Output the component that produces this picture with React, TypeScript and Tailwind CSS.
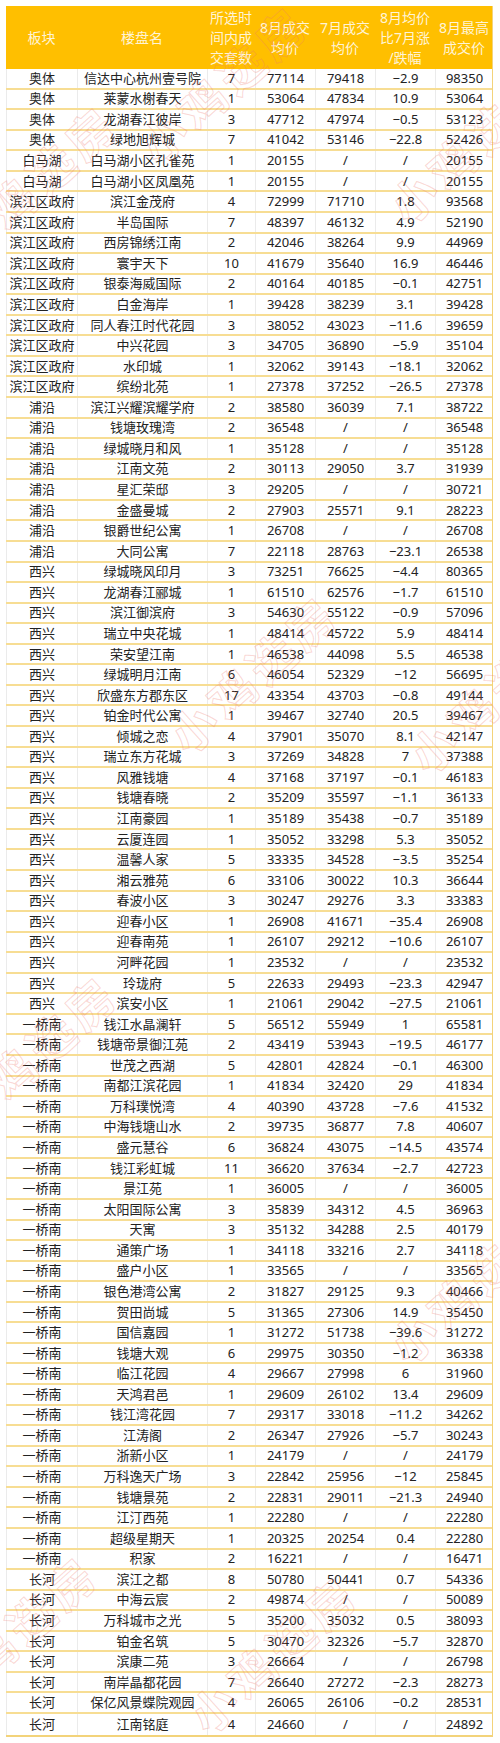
import React from "react";

type Row = [string, string, string, string, string, string, string];

const raw = `奥体 信达中心杭州壹号院 7 77114 79418 -2.9 98350
奥体 莱蒙水榭春天 1 53064 47834 10.9 53064
奥体 龙湖春江彼岸 3 47712 47974 -0.5 53123
奥体 绿地旭辉城 7 41042 53146 -22.8 52426
白马湖 白马湖小区孔雀苑 1 20155 / / 20155
白马湖 白马湖小区凤凰苑 1 20155 / / 20155
滨江区政府 滨江金茂府 4 72999 71710 1.8 93568
滨江区政府 半岛国际 7 48397 46132 4.9 52190
滨江区政府 西房锦绣江南 2 42046 38264 9.9 44969
滨江区政府 寰宇天下 10 41679 35640 16.9 46446
滨江区政府 银泰海威国际 2 40164 40185 -0.1 42751
滨江区政府 白金海岸 1 39428 38239 3.1 39428
滨江区政府 同人春江时代花园 3 38052 43023 -11.6 39659
滨江区政府 中兴花园 3 34705 36890 -5.9 35104
滨江区政府 水印城 1 32062 39143 -18.1 32062
滨江区政府 缤纷北苑 1 27378 37252 -26.5 27378
浦沿 滨江兴耀滨耀学府 2 38580 36039 7.1 38722
浦沿 钱塘玫瑰湾 2 36548 / / 36548
浦沿 绿城晓月和风 1 35128 / / 35128
浦沿 江南文苑 2 30113 29050 3.7 31939
浦沿 星汇荣邸 3 29205 / / 30721
浦沿 金盛曼城 2 27903 25571 9.1 28223
浦沿 银爵世纪公寓 1 26708 / / 26708
浦沿 大同公寓 7 22118 28763 -23.1 26538
西兴 绿城晓风印月 3 73251 76625 -4.4 80365
西兴 龙湖春江郦城 1 61510 62576 -1.7 61510
西兴 滨江御滨府 3 54630 55122 -0.9 57096
西兴 瑞立中央花城 1 48414 45722 5.9 48414
西兴 荣安望江南 1 46538 44098 5.5 46538
西兴 绿城明月江南 6 46054 52329 -12 56695
西兴 欣盛东方郡东区 17 43354 43703 -0.8 49144
西兴 铂金时代公寓 1 39467 32740 20.5 39467
西兴 倾城之恋 4 37901 35070 8.1 42147
西兴 瑞立东方花城 3 37269 34828 7 37388
西兴 风雅钱塘 4 37168 37197 -0.1 46183
西兴 钱塘春晓 2 35209 35597 -1.1 36133
西兴 江南豪园 1 35189 35438 -0.7 35189
西兴 云厦连园 1 35052 33298 5.3 35052
西兴 温馨人家 5 33335 34528 -3.5 35254
西兴 湘云雅苑 6 33106 30022 10.3 36644
西兴 春波小区 3 30247 29276 3.3 33383
西兴 迎春小区 1 26908 41671 -35.4 26908
西兴 迎春南苑 1 26107 29212 -10.6 26107
西兴 河畔花园 1 23532 / / 23532
西兴 玲珑府 5 22633 29493 -23.3 42947
西兴 滨安小区 1 21061 29042 -27.5 21061
一桥南 钱江水晶澜轩 5 56512 55949 1 65581
一桥南 钱塘帝景御江苑 2 43419 53943 -19.5 46177
一桥南 世茂之西湖 5 42801 42824 -0.1 46300
一桥南 南都江滨花园 1 41834 32420 29 41834
一桥南 万科璞悦湾 4 40390 43728 -7.6 41532
一桥南 中海钱塘山水 2 39735 36877 7.8 40607
一桥南 盛元慧谷 6 36824 43075 -14.5 43574
一桥南 钱江彩虹城 11 36620 37634 -2.7 42723
一桥南 景江苑 1 36005 / / 36005
一桥南 太阳国际公寓 3 35839 34312 4.5 36963
一桥南 天寓 3 35132 34288 2.5 40179
一桥南 通策广场 1 34118 33216 2.7 34118
一桥南 盛户小区 1 33565 / / 33565
一桥南 银色港湾公寓 2 31827 29125 9.3 40466
一桥南 贺田尚城 5 31365 27306 14.9 35450
一桥南 国信嘉园 1 31272 51738 -39.6 31272
一桥南 钱塘大观 6 29975 30350 -1.2 36338
一桥南 临江花园 4 29667 27998 6 31960
一桥南 天鸿君邑 1 29609 26102 13.4 29609
一桥南 钱江湾花园 7 29317 33018 -11.2 34262
一桥南 江涛阁 2 26347 27926 -5.7 30243
一桥南 浙新小区 1 24179 / / 24179
一桥南 万科逸天广场 3 22842 25956 -12 25845
一桥南 钱塘景苑 2 22831 29011 -21.3 24940
一桥南 江汀西苑 1 22280 / / 22280
一桥南 超级星期天 1 20325 20254 0.4 22280
一桥南 积家 2 16221 / / 16471
长河 滨江之都 8 50780 50441 0.7 54336
长河 中海云宸 2 49874 / / 50089
长河 万科城市之光 5 35200 35032 0.5 38093
长河 铂金名筑 5 30470 32326 -5.7 32870
长河 滨康二苑 3 26664 / / 26798
长河 南岸晶都花园 7 26640 27272 -2.3 28273
长河 保亿风景蝶院观园 4 26065 26106 -0.2 28531
长河 江南铭庭 4 24660 / / 24892`;

const rows: Row[] = raw
  .split("\n")
  .map((line) => line.trim().split(/\s+/).map((c) => c.replace(/^-/, "−")) as Row);

const cols = "grid grid-cols-[71px_130px_48px_60px_60px_60px_58px]";

const headers: string[][] = [
  ["板块"],
  ["楼盘名"],
  ["所选时", "间内成", "交套数"],
  ["8月成交", "均价"],
  ["7月成交", "均价"],
  ["8月均价", "比7月涨", "/跌幅"],
  ["8月最高", "成交价"],
];

// faint watermark spots: [left, top]
const marks: [number, number][] = [
  [120, 50],
  [370, 110],
  [-70, 150],
  [150, 640],
  [390, 660],
  [-70, 1020],
  [370, 1250],
  [170, 1620],
  [-90, 1600],
];

export default function App() {
  return (
    <div className="relative w-[500px] h-[1743px] bg-white overflow-hidden font-['Noto_Sans','Noto_Sans_CJK_SC',sans-serif]">
      <div className="pt-[6px] pl-[6px]">
        <div className="w-[487px] border-r border-b-2 border-[#f3d37a]">
          {/* header */}
          <div className={`${cols} h-[63px] bg-[#ffbf00] text-[#fff4d6] text-[14px] leading-[20px] text-center`}>
            {headers.map((h, i) => (
              <div key={i} className="flex flex-col items-center justify-center whitespace-nowrap">
                {h.map((t, k) => (
                  <span key={k}>{t}</span>
                ))}
              </div>
            ))}
          </div>

          {/* body */}
          {rows.map((r, i) => (
            <div
              key={i}
              className={`${cols} h-[20.57px] text-[13px] text-[#222] leading-none text-center ${
                i === rows.length - 1 ? "" : "border-b-2 border-[#f7dd93]"
              }`}
            >
              {r.map((c, j) => (
                <div
                  key={j}
                  className="flex items-center justify-center whitespace-nowrap border-l border-[#ebebeb]"
                >
                  {c}
                </div>
              ))}
            </div>
          ))}
        </div>
      </div>

      {/* watermark */}
      {marks.map(([l, t], i) => (
        <div
          key={i}
          className="pointer-events-none absolute text-[46px] font-bold tracking-[6px] text-transparent [-webkit-text-stroke:1px_rgba(238,120,110,0.3)] -rotate-[42deg] whitespace-nowrap"
          style={{ left: l, top: t }}
        >
          小鸡选房
        </div>
      ))}
    </div>
  );
}
